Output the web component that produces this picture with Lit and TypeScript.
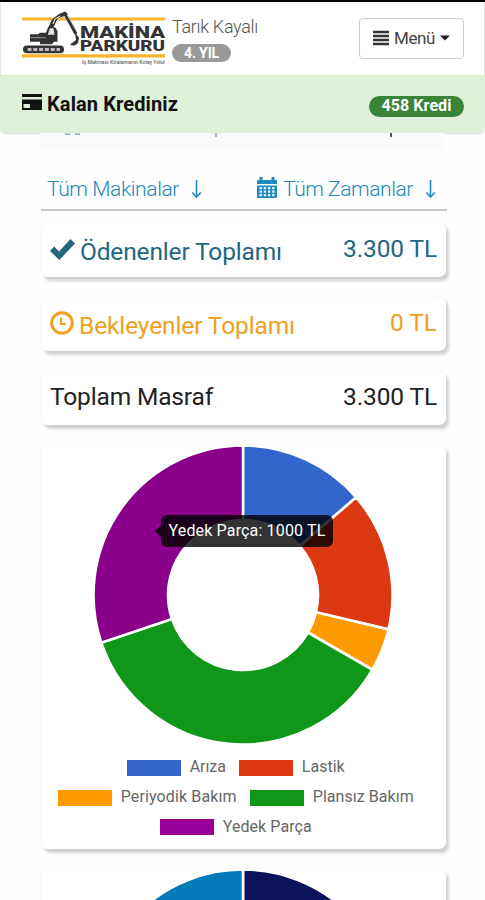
import { LitElement, html, svg, css } from "lit";
import { customElement, property } from "lit/decorators.js";

interface Slice { from: number; to: number; color: string; }

const EXPENSES: Slice[] = [
  { from: 0, to: 49.2, color: "#3366cc" },
  { from: 49.2, to: 103.3, color: "#dc3912" },
  { from: 103.3, to: 120, color: "#ff9900" },
  { from: 120, to: 251.4, color: "#109618" },
  { from: 251.4, to: 360, color: "#8b008b" },
];
const MACHINES: Slice[] = [
  { from: 0, to: 180, color: "#0a1259" },
  { from: 180, to: 360, color: "#0279b8" },
];
const LEGEND = [
  [{ label: "Arıza", color: "#3366cc", w: 36 }, { label: "Lastik", color: "#dc3912", w: 43 }],
  [{ label: "Periyodik Bakım", color: "#ff9900", w: 116 }, { label: "Plansız Bakım", color: "#109618", w: 101 }],
  [{ label: "Yedek Parça", color: "#990099", w: 89 }],
];

@customElement("donut-chart")
export class DonutChart extends LitElement {
  @property({ attribute: false }) slices: Slice[] = [];
  static styles = css`
    :host { display: block; width: 300px; height: 300px; }
    svg { display: block; }
  `;
  private arc(s: Slice) {
    const p = (deg: number, r: number) => {
      const a = ((deg - 90) * Math.PI) / 180;
      return `${(150 + r * Math.cos(a)).toFixed(2)} ${(150 + r * Math.sin(a)).toFixed(2)}`;
    };
    const large = s.to - s.from > 180 ? 1 : 0;
    return `M${p(s.from, 149.5)}A149.5 149.5 0 ${large} 1 ${p(s.to, 149.5)}L${p(s.to, 75)}A75 75 0 ${large} 0 ${p(s.from, 75)}Z`;
  }
  render() {
    return html`<svg width="300" height="300" viewBox="0 0 300 300">
      ${this.slices.map((s) => svg`<path d=${this.arc(s)} fill=${s.color} stroke="#fff" stroke-width="2.6"></path>`)}
    </svg>`;
  }
}

@customElement("site-logo")
export class SiteLogo extends LitElement {
  static styles = css`
    :host { display: block; width: 144px; height: 58px; }
    svg { display: block; }
    .name { font: 900 17px Roboto, sans-serif; fill: #333; }
    .name.second { font-size: 15px; }
    .sub { font: 500 5px Roboto, sans-serif; fill: #666; }
  `;
  render() {
    return html`<svg width="144" height="58" viewBox="0 0 144 58">
      <path d="M0 8H143M0 44.8H143" stroke="#f4b52c" stroke-width="3.2"></path>
      <rect x="1" y="34.6" width="41" height="7.6" rx="3.8" fill="#333"></rect>
      <path d="M5.5 38.4H38" stroke="#bbb" stroke-width="3" stroke-dasharray="4 1.8"></path>
      <path d="M8 23.2H16L18 21.7H24L26 16.2H33L35.5 19.7V30.7H32L30 33.2H18V30.7H8Z" fill="#333"></path>
      <path d="M26 23L28 17.2H31.5L32.5 23.7H26Z" fill="#e3e3e3"></path>
      <path d="M8.5 26.7H24" stroke="#999" stroke-width="1"></path>
      <path d="M26 17L30 8.5L37 3L43 .4L46 3L43 5L36 7L31 17Z" fill="#333"></path>
      <path d="M31 13L33 8L38 5" fill="none" stroke="#fff" stroke-width="1"></path>
      <path d="M42.5 2L54 23" stroke="#333" stroke-width="3"></path>
      <path d="M45 4L55 20" stroke="#ccc" stroke-width=".8"></path>
      <path d="M53 21L57 27L56 32Q53 36 48 33.5L54 29Z" fill="#333"></path>
      <text class="name" x="58" y="27.2" textLength="85" lengthAdjust="spacingAndGlyphs">MAKİNA</text>
      <text class="name second" x="58" y="39.8" textLength="85" lengthAdjust="spacingAndGlyphs">PARKURU</text>
      <text class="sub" x="60" y="52.5" textLength="83" lengthAdjust="spacingAndGlyphs">İş Makinası Kiralamanın Kolay Yolu!</text>
    </svg>`;
  }
}

@customElement("fit-text")
export class FitText extends LitElement {
  @property() text = "";
  @property({ type: Number }) w = 0;
  static styles = css`
    :host { display: block; flex: none; white-space: nowrap; }
    span { display: inline-block; white-space: nowrap; }
  `;
  render() { return html`<span>${this.text}</span>`; }
  /* Spreads the letters so that the label fills its nominal width. */
  updated() {
    const span = this.renderRoot.querySelector("span") as HTMLElement;
    const natural = span.getBoundingClientRect().width;
    if (this.w && natural) {
      span.style.letterSpacing = `${(this.w - natural) / this.text.length}px`;
      this.style.width = `${this.w}px`;
    }
  }
}

@customElement("app-root")
export class AppRoot extends LitElement {
  static styles = css`
    :host { display: block; width: 485px; height: 900px; overflow: hidden; background: #fefefe; font-family: Roboto, sans-serif; color: #222; }
    * { box-sizing: border-box; }
    svg { display: block; flex: none; }
    .header { border-top: 2px solid #000; height: 133px; border-radius: 0 0 5px 5px; overflow: hidden; box-shadow: 0 1px 2px #0002; }
    .brand { height: 73px; display: flex; background: #fff; padding: 9px 20px 0 21px; border-left: 1px solid #e5e5e5; border-right: 1px solid #ddd; }
    .user { margin-left: 6px; padding-top: 5px; display: flex; flex-direction: column; }
    .user-name { font-size: 18px; line-height: 22px; font-weight: 300; color: #555; }
    .badge { background: #999; color: #fff; width: 59px; height: 18px; border-radius: 9px; margin-top: 6px; display: flex; justify-content: center; font-size: 14px; line-height: 18px; font-weight: 700; }
    .menu { margin: 7px 0 0 auto; width: 105px; height: 41px; border: 1px solid #ccc; border-radius: 4px; display: flex; align-items: center; padding-left: 13px; background: #fff; font-size: 17px; color: #444; }
    .menu fit-text { margin: -2px 5px 0 5px; }
    .menu svg { margin-top: -2px; }
    .credit { height: 58px; background: #dff0d8; border-top: 1px solid #d6e9c6; display: flex; align-items: center; padding: 0 21px 0 22px; }
    .credit svg { margin-top: -5px; }
    .credit-title { font-size: 20px; font-weight: 700; color: #111; margin: -2px 0 0 5px; }
    .credit-count { margin: 3px 0 0 auto; width: 95px; height: 21px; border-radius: 11px; background: #398439; color: #fff; display: flex; justify-content: center; font-size: 16px; line-height: 20px; font-weight: 700; }
    .peek { height: 17px; margin: 0 40px; background: #fafafa; display: flex; align-items: flex-start; padding-left: 24px; }
    .filters { margin: 17px 38px 0 41px; height: 44px; border-bottom: 2px solid #c4c4c4; display: flex; align-items: flex-start; padding: 10px 11px 0 6px; font-size: 21px; line-height: 24px; font-weight: 300; color: #2088bd; }
    .filters .arrow { margin: 3px 0 0 12px; }
    .filters .cal { margin: 0 6px 0 auto; }
    .card { margin: 0 39px 20px 41px; border-radius: 7px; background: #fff; box-shadow: 3px 4px 3px #cfd1d3, 0 0 2px #eee; }
    .total { height: 54px; display: flex; align-items: center; justify-content: space-between; padding: 0 9px 2px 9px; font-size: 24.5px; line-height: 30px; }
    .total .label { display: flex; align-items: center; gap: 5px; }
    .total .label fit-text { margin-top: 5px; }
    .total.sum .label fit-text { margin-top: 0; }
    .paid { margin-top: 12px; color: #246580; }
    .pending { color: #f0a01e; }
    .chart { height: 404px; position: relative; }
    .chart donut-chart { margin-left: 52px; }
    .tip { position: absolute; left: 114px; top: 70px; display: flex; align-items: center; }
    .tip-box { width: 172px; height: 32px; border-radius: 6px; background: rgba(0,0,0,.8); color: #fff; font-size: 16px; line-height: 31px; display: flex; justify-content: center; }
    .legend { padding-top: 8px; }
    .row { display: flex; justify-content: center; height: 29.7px; align-items: center; gap: 13.5px; padding-right: 15px; }
    .item { display: flex; align-items: center; gap: 8.5px; font-size: 16px; line-height: 22px; color: #666; }
    .item fit-text { margin-top: -1px; }
    .swatch { width: 54px; height: 16px; }
  `;
  private arrow() {
    return html`<svg class="arrow" width="11" height="18" viewBox="0 0 11 18"><path d="M5.5 0V17M1.2 12.5L5.5 17L9.8 12.5" fill="none" stroke="#2088bd" stroke-width="1.6"></path></svg>`;
  }
  render() {
    return html`
      <div class="header">
        <div class="brand">
          <site-logo></site-logo>
          <div class="user">
            <fit-text class="user-name" text="Tarık Kayalı" w="86"></fit-text>
            <div class="badge"><fit-text text="4. YIL" w="35"></fit-text></div>
          </div>
          <div class="menu">
            <svg width="16" height="16" viewBox="0 0 16 16"><path d="M0 2H16M0 6H16M0 10H16M0 14H16" stroke="#333" stroke-width="2.6"></path></svg>
            <fit-text text="Menü" w="41"></fit-text>
            <svg width="10" height="6" viewBox="0 0 10 6"><path d="M0 .5H10L5 5.5Z" fill="#222"></path></svg>
          </div>
        </div>
        <div class="credit">
          <svg width="20" height="16" viewBox="0 0 20 16"><path d="M0 0H20V3H0ZM0 5.5H20V16H0Z" fill="#111"></path><path d="M1.5 10H8V14H1.5Z" fill="#dff0d8"></path></svg>
          <fit-text class="credit-title" text="Kalan Krediniz" w="131"></fit-text>
          <div class="credit-count"><fit-text text="458 Kredi" w="70"></fit-text></div>
        </div>
      </div>
      <div class="peek">
        <svg width="340" height="5" viewBox="0 0 340 5"><path d="M1 1.2H6M11 1.2H16" stroke="#7eaed0" stroke-width="1.4"></path><path d="M152 0V4" stroke="#6497c0" stroke-width="1.3"></path><path d="M327 0V4" stroke="#555" stroke-width="2"></path></svg>
      </div>
      <div class="filters">
        <fit-text text="Tüm Makinalar" w="132"></fit-text>${this.arrow()}
        <svg class="cal" width="20" height="21" viewBox="0 0 20 21"><path d="M1 3H19Q20 3 20 4V7H0V4Q0 3 1 3ZM0 8.5H20V20Q20 21 19 21H1Q0 21 0 20Z" fill="#2088bd"></path><path d="M4 0V4M16 0V4" stroke="#2088bd" stroke-width="3"></path><path d="M2.5 11.2H17.5M2.5 14.7H17.5M2.5 18.2H17.5" stroke="#e4f2f9" stroke-width="2.2" stroke-dasharray="2.4 1.8"></path></svg>
        <fit-text text="Tüm Zamanlar" w="130"></fit-text>${this.arrow()}
      </div>
      <div class="card total paid">
        <div class="label">
          <svg width="25" height="21" viewBox="0 0 25 21"><path d="M0 12L4.2 7.5L9 12.5L20.5 0L25 4.5L9.3 21Z" fill="#246580"></path></svg>
          <fit-text text="Ödenenler Toplamı" w="202"></fit-text>
        </div>
        <fit-text text="3.300 TL" w="94"></fit-text>
      </div>
      <div class="card total pending">
        <div class="label">
          <svg width="24" height="24" viewBox="0 0 24 24"><circle cx="12" cy="12" r="10.3" fill="none" stroke="#f0a01e" stroke-width="3"></circle><path d="M11 6.5V13H16" fill="none" stroke="#f0a01e" stroke-width="2"></path></svg>
          <fit-text text="Bekleyenler Toplamı" w="216"></fit-text>
        </div>
        <fit-text text="0 TL" w="47"></fit-text>
      </div>
      <div class="card total sum">
        <div class="label"><fit-text text="Toplam Masraf" w="163"></fit-text></div>
        <fit-text text="3.300 TL" w="94"></fit-text>
      </div>
      <div class="card chart">
        <donut-chart .slices=${EXPENSES}></donut-chart>
        <div class="tip">
          <svg width="6" height="12" viewBox="0 0 6 12"><path d="M6 0L0 6L6 12Z" fill="#000" fill-opacity=".8"></path></svg>
          <div class="tip-box"><fit-text text="Yedek Parça: 1000 TL" w="157"></fit-text></div>
        </div>
        <div class="legend">
          ${LEGEND.map((row) => html`<div class="row">${row.map((i) => html`
            <div class="item"><svg class="swatch"><rect width="54" height="16" fill=${i.color}></rect></svg><fit-text text=${i.label} w=${i.w}></fit-text></div>`)}</div>`)}
        </div>
      </div>
      <div class="card chart"><donut-chart .slices=${MACHINES}></donut-chart></div>
    `;
  }
}
